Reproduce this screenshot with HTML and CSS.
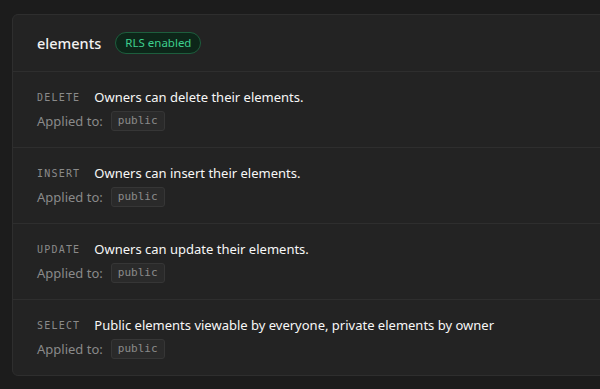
FILE: index.html
```html
<!DOCTYPE html>
<html lang="en">
<head>
  <meta charset="UTF-8">
  <title>Policies</title>
  <link rel="stylesheet" href="styles.css">
</head>
<body>
  <div class="card">
    <div class="card-head">
      <h2 class="table-name">elements</h2>
      <span class="rls-badge">RLS enabled</span>
    </div>

    <div class="policy">
      <div class="policy-line">
        <span class="cmd">DELETE</span>
        <span class="policy-name">Owners can delete their elements.</span>
      </div>
      <div class="applied">Applied to: <code class="role">public</code></div>
    </div>

    <div class="policy">
      <div class="policy-line">
        <span class="cmd">INSERT</span>
        <span class="policy-name">Owners can insert their elements.</span>
      </div>
      <div class="applied">Applied to: <code class="role">public</code></div>
    </div>

    <div class="policy">
      <div class="policy-line">
        <span class="cmd">UPDATE</span>
        <span class="policy-name">Owners can update their elements.</span>
      </div>
      <div class="applied">Applied to: <code class="role">public</code></div>
    </div>

    <div class="policy">
      <div class="policy-line">
        <span class="cmd">SELECT</span>
        <span class="policy-name">Public elements viewable by everyone, private elements by owner</span>
      </div>
      <div class="applied">Applied to: <code class="role">public</code></div>
    </div>
  </div>
</body>
</html>
```

FILE: styles.css
```css
body { margin: 0; background: #1c1c1c; font-family: "Noto Sans", "Open Sans", sans-serif; color: #ededed; overflow: hidden; }
.card { margin: 14px -20px 0 12px; background: #232323; border: 1px solid #2e2e2e; border-radius: 6px; }
.card-head { display: flex; align-items: center; gap: 14px; height: 56px; padding: 0 24px; border-bottom: 1px solid #2e2e2e; }
.table-name { margin: 0; font-size: 14.5px; font-weight: 500; color: #f2f2f2; }
.rls-badge { font-size: 11.5px; color: #3ecf8e; background: #0d2619; border: 1px solid #1d5e3d; border-radius: 12px; padding: 4px 9px; line-height: 12px; }
.policy { height: 75px; padding: 0 24px; display: flex; flex-direction: column; justify-content: center; gap: 5px; border-bottom: 1px solid #2e2e2e; }
.policy:last-child { border-bottom: none; }
.policy-line { display: flex; align-items: center; gap: 14px; }
.cmd { font-family: "DejaVu Sans Mono", monospace; font-size: 10px; letter-spacing: 1.2px; color: #8a8a8a; }
.policy-name { font-size: 13px; color: #f7f7f7; }
.applied { font-size: 13px; color: #8a8a8a; display: flex; align-items: center; gap: 8px; }
.role { font-family: "DejaVu Sans Mono", monospace; font-size: 11px; color: #8a8a8a; background: #2a2a2a; border: 1px solid #363636; border-radius: 3px; padding: 2px 6px; line-height: 14px; }
```
